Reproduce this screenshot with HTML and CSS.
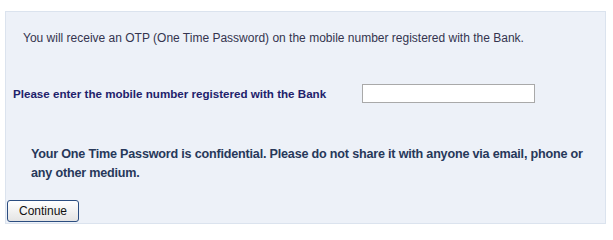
FILE: index.html
```html
<!DOCTYPE html>
<html>
<head>
<meta charset="utf-8">
<link rel="stylesheet" href="styles.css">
</head>
<body>
<div class="panel">
  <p class="intro">You will receive an OTP (One Time Password) on the mobile number registered with the Bank.</p>
  <div class="field-row">
    <label class="field-label" for="mobile">Please enter the mobile number registered with the Bank</label>
    <input class="field-input" id="mobile" type="text">
  </div>
  <p class="notice">Your One Time Password is confidential. Please do not share it with anyone via email, phone or any other medium.</p>
  <button class="btn" type="button">Continue</button>
</div>
</body>
</html>
```
FILE: styles.css
```css
html, body {
  margin: 0;
  padding: 0;
  background: #ffffff;
}
body {
  font-family: "Liberation Sans", Arial, sans-serif;
}
.panel {
  box-sizing: border-box;
  margin: 11px 0 0 5px;
  width: 601px;
  height: 213px;
  background: #edf1f8;
  border: 1px solid #dbe3ee;
  padding: 19px 0 0 1px;
}
.intro {
  margin: 0 0 0 16px;
  font-size: 12px;
  line-height: 14px;
  color: #34344f;
}
.field-row {
  display: flex;
  align-items: center;
  margin-top: 39px;
  padding-left: 6px;
}
.field-label {
  width: 349px;
  font-size: 11.6px;
  font-weight: bold;
  line-height: 14px;
  color: #21216b;
}
.field-input {
  box-sizing: border-box;
  width: 173px;
  height: 19px;
  margin: 0;
  padding: 0 3px;
  border: 1px solid #a9a9a9;
  background: #ffffff;
  font: 12px "Liberation Sans", Arial, sans-serif;
}
.notice {
  margin: 42px 0 0 24px;
  font-size: 12.6px;
  font-weight: bold;
  letter-spacing: -0.2px;
  line-height: 19px;
  color: #27385a;
}
.btn {
  display: block;
  box-sizing: border-box;
  margin-top: 17px;
  width: 72px;
  height: 22px;
  padding: 0;
  border: 1px solid #2b4d80;
  border-radius: 3px;
  background: linear-gradient(#ffffff, #e4e4e4);
  font: 12px "Liberation Sans", Arial, sans-serif;
  color: #111111;
}
```
